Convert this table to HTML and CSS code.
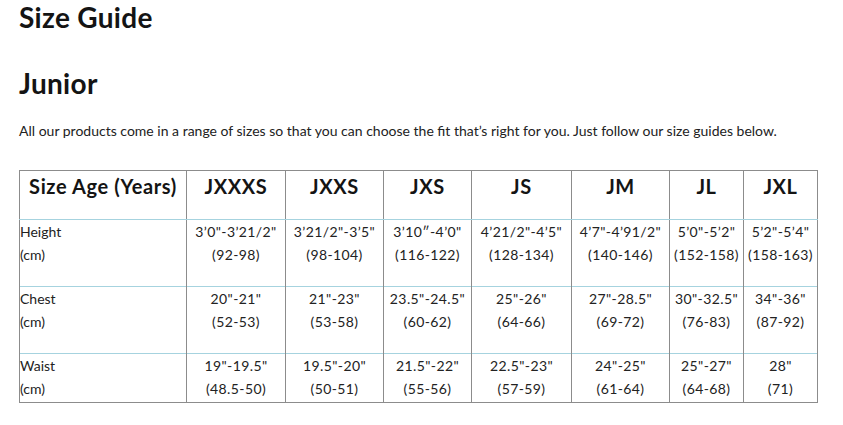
FILE: index.html
```
<!DOCTYPE html>
<html lang="en">
<head>
<meta charset="utf-8">
<title>Size Guide</title>
<link rel="stylesheet" href="styles.css">
</head>
<body>
<main class="page">
  <h1 class="title">Size Guide</h1>
  <h2 class="subtitle">Junior</h2>
  <p class="intro">All our products come in a range of sizes so that you can choose the fit that’s right for you. Just follow our size guides below.</p>
  <table class="sizes">
    <colgroup>
      <col class="c-label"><col class="c-99"><col class="c-98"><col class="c-88"><col class="c-100"><col class="c-98"><col class="c-74"><col class="c-74">
    </colgroup>
    <thead>
      <tr>
        <th>Size Age (Years)</th><th>JXXXS</th><th>JXXS</th><th>JXS</th><th>JS</th><th>JM</th><th>JL</th><th>JXL</th>
      </tr>
    </thead>
    <tbody>
      <tr>
        <td class="label">Height<br>(cm)</td>
        <td>3’0"-3’21/2"<br>(92-98)</td>
        <td>3’21/2"-3’5"<br>(98-104)</td>
        <td>3’10″-4’0"<br>(116-122)</td>
        <td>4’21/2"-4’5"<br>(128-134)</td>
        <td>4’7"-4’91/2"<br>(140-146)</td>
        <td>5’0"-5’2"<br>(152-158)</td>
        <td>5’2"-5’4"<br>(158-163)</td>
      </tr>
      <tr>
        <td class="label">Chest<br>(cm)</td>
        <td>20"-21"<br>(52-53)</td>
        <td>21"-23"<br>(53-58)</td>
        <td>23.5"-24.5"<br>(60-62)</td>
        <td>25"-26"<br>(64-66)</td>
        <td>27"-28.5"<br>(69-72)</td>
        <td>30"-32.5"<br>(76-83)</td>
        <td>34"-36"<br>(87-92)</td>
      </tr>
      <tr class="last">
        <td class="label">Waist<br>(cm)</td>
        <td>19"-19.5"<br>(48.5-50)</td>
        <td>19.5"-20"<br>(50-51)</td>
        <td>21.5"-22"<br>(55-56)</td>
        <td>22.5"-23"<br>(57-59)</td>
        <td>24"-25"<br>(61-64)</td>
        <td>25"-27"<br>(64-68)</td>
        <td>28"<br>(71)</td>
      </tr>
    </tbody>
  </table>
</main>
</body>
</html>
```
FILE: styles.css
```
html, body {
  margin: 0;
  padding: 0;
  background: #ffffff;
}

body {
  font-family: "Lato", "Open Sans", sans-serif;
  color: #1c1c1c;
}

.page {
  padding: 0 19px;
}

.title,
.subtitle {
  margin: 0;
  font-size: 28px;
  line-height: 34px;
  font-weight: 700;
  letter-spacing: 0.3px;
  color: #141414;
}

.subtitle {
  margin-top: 32px;
}

.intro {
  margin: 21px 0 0;
  font-size: 14px;
  line-height: 20px;
  color: #222;
}

.sizes {
  margin-top: 29px;
  border-collapse: collapse;
  table-layout: fixed;
  width: 799px;
  border: 1px solid #8c8c8c;
}

.c-label { width: 167px; }
.c-99 { width: 99px; }
.c-98 { width: 98px; }
.c-88 { width: 88px; }
.c-100 { width: 100px; }
.c-74 { width: 74px; }

.sizes th {
  padding: 0 0 18px;
  font-size: 20px;
  line-height: 30px;
  font-weight: 700;
  letter-spacing: 0.6px;
  text-align: center;
  vertical-align: top;
  color: #141414;
  border-left: 1px solid #8c8c8c;
  border-right: 1px solid #8c8c8c;
  border-bottom: 1px solid #a6d3df;
}

.sizes td {
  padding: 0 0 20px;
  font-size: 14px;
  line-height: 23px;
  letter-spacing: 0.4px;
  text-align: center;
  vertical-align: top;
  white-space: nowrap;
  color: #222;
  border-left: 1px solid #8c8c8c;
  border-right: 1px solid #8c8c8c;
  border-top: 1px solid #a6d3df;
}

.sizes td.label {
  text-align: left;
  letter-spacing: 0;
}

.sizes tr.last td {
  padding-bottom: 2px;
}
```
